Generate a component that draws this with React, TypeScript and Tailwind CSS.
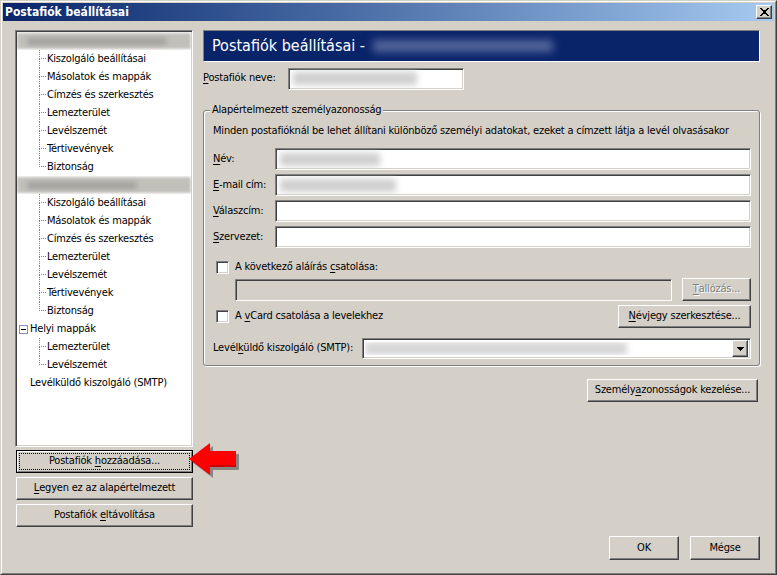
const raised =
  "border border-t-white border-l-white border-r-[#404040] border-b-[#404040] shadow-[inset_-1px_-1px_#808080,inset_1px_1px_#d4d0c8] bg-[#d4d0c8]";
const sunken =
  "border border-t-[#808080] border-l-[#808080] border-r-white border-b-white shadow-[inset_1px_1px_#404040,inset_-1px_-1px_#d4d0c8]";

const accountItems = [
  "Kiszolgáló beállításai",
  "Másolatok és mappák",
  "Címzés és szerkesztés",
  "Lemezterület",
  "Levélszemét",
  "Tértivevények",
  "Biztonság",
];

const U = ({ children }: { children: React.ReactNode }) => (
  <span className="underline underline-offset-[2px] decoration-1">{children}</span>
);

function TreeChild({ label, last }: { label: string; last?: boolean }) {
  return (
    <div className="flex h-[18px]">
      <div className="w-[22px] shrink-0" />
      <div className="flex w-[7px] shrink-0 flex-col">
        <div className="h-[9px] border-b border-l border-dotted border-[#808080]" />
        <div className={last ? "flex-1" : "flex-1 border-l border-dotted border-[#808080]"} />
      </div>
      <span className="self-center pl-px leading-[14px]">{label}</span>
    </div>
  );
}

// account name rows are blurred in the original
function BlurRow({ w }: { w: number }) {
  return (
    <div className="flex h-[18px] items-center overflow-hidden">
      <div className="flex h-[16px] w-full items-center bg-[#c2c0bb] pl-[10px] blur-[1.5px]">
        <div className={`h-[7px] rounded-full bg-[#a3a19d] blur-[2px] ${w === 1 ? "w-[140px]" : "w-[110px]"}`} />
      </div>
    </div>
  );
}

function Btn({ children, className = "", disabled }: { children: React.ReactNode; className?: string; disabled?: boolean }) {
  return (
    <div
      className={`${raised} flex h-[23px] items-center justify-center ${
        disabled ? "text-[#808080] [text-shadow:1px_1px_0_#ffffff]" : ""
      } ${className}`}
    >
      {children}
    </div>
  );
}

function Check() {
  return <div className={`${sunken} h-[13px] w-[13px] shrink-0 bg-white`} />;
}

function Field({ blur, className = "" }: { blur?: string; className?: string }) {
  return (
    <div className={`${sunken} flex h-[22px] items-center overflow-hidden bg-white pl-[4px] ${className}`}>
      {blur && <div className={`h-[13px] bg-[#cfcfcf] blur-[3px] ${blur}`} />}
    </div>
  );
}

export default function App() {
  return (
    <div className="h-[575px] w-[777px] border border-t-[#d4d0c8] border-l-[#d4d0c8] border-r-[#404040] border-b-[#404040] bg-[#d4d0c8] text-[11px] tracking-[-0.2px] text-black [font-family:'DejaVu_Sans_Condensed','DejaVu_Sans',sans-serif] [font-stretch:condensed]">
      <div className="flex h-full flex-col border border-t-white border-l-white border-r-[#808080] border-b-[#808080] p-px">
        {/* title bar */}
        <div className="flex h-[18px] shrink-0 items-center justify-between bg-linear-to-r from-[#0a246a] to-[#a6caf0] pl-[2px] pr-[2px]">
          <span className="text-[12px] font-bold tracking-normal text-white">Postafiók beállításai</span>
          <div className={`${raised} flex h-[14px] w-[16px] items-center justify-center`}>
            <svg width="9" height="8" viewBox="0 0 9 8" shapeRendering="crispEdges">
              <path d="M0 0h2v1h1v1h3v-1h1v-1h2v1h-1v1h-1v1h-1v2h1v1h1v1h1v1h-2v-1h-1v-1h-3v1h-1v1h-2v-1h1v-1h1v-1h1v-2h-1v-1h-1z" fill="#000" />
              <rect x="3" y="3" width="3" height="2" fill="#000" />
            </svg>
          </div>
        </div>

        {/* body */}
        <div className="flex flex-1 pb-[12px] pl-[12px] pt-[9px]">
          {/* left column */}
          <div className="relative flex w-[178px] shrink-0 flex-col">
            <div className={`${sunken} h-[417px] bg-white p-px`}>
              <BlurRow w={1} />
              {accountItems.map((t, i) => (
                <TreeChild key={"a" + i} label={t} last={i === accountItems.length - 1} />
              ))}
              <BlurRow w={2} />
              {accountItems.map((t, i) => (
                <TreeChild key={"b" + i} label={t} last={i === accountItems.length - 1} />
              ))}
              <div className="flex h-[18px] items-center">
                <div className="ml-[2px] flex h-[9px] w-[9px] items-center justify-center border border-[#8b8bc4] bg-white">
                  <div className="h-px w-[5px] bg-black" />
                </div>
                <span className="ml-[2px] leading-[14px]">Helyi mappák</span>
              </div>
              <TreeChild label="Lemezterület" />
              <TreeChild label="Levélszemét" last />
              <div className="flex h-[18px] items-center pl-[13px]">
                <span className="leading-[14px]">Levélküldő kiszolgáló (SMTP)</span>
              </div>
            </div>

            <div className="ml-px mt-[3px] flex w-[177px] flex-col gap-[4px]">
              <div className="h-[23px] border border-black">
                <div className="h-full border border-t-white border-l-white border-r-[#808080] border-b-[#808080] bg-[#d4d0c8] p-px">
                  <div className="flex h-full items-center justify-center border border-dotted border-black">
                    Postafiók&nbsp;<U>h</U>ozzáadása...
                  </div>
                </div>
              </div>
              <Btn>
                <U>L</U>egyen ez az alapértelmezett
              </Btn>
              <Btn>
                Postafiók&nbsp;<U>e</U>ltávolítása
              </Btn>
            </div>

            {/* red annotation arrow */}
            <svg className="absolute left-[172px] top-[412px]" width="54" height="38" viewBox="0 0 54 38">
              <polygon points="5,20 26,4 26,12 52,12 52,28 26,28 26,36" fill="rgba(0,0,0,0.35)" />
              <polygon points="2,17 23,1 23,9 49,9 49,25 23,25 23,33" fill="#ff0000" />
              <polygon points="23,25 49,25 49,23 23,23" fill="#d10000" />
            </svg>
          </div>

          {/* right column */}
          <div className="ml-[10px] flex w-[557px] shrink-0 flex-col">
            <div className="flex h-[32px] items-center overflow-hidden border border-t-[#808080] border-l-[#808080] border-r-white border-b-white bg-[#0a246a] pl-[8px]">
              <span className="text-[16px] tracking-normal text-white">Postafiók beállításai -</span>
              <div className="ml-[8px] h-[12px] w-[180px] bg-[#56689c] blur-[4px]" />
            </div>

            <div className="mt-[6px] flex h-[21px] items-center">
              <span className="w-[85px]">
                <U>P</U>ostafiók neve:
              </span>
              <Field className="h-[21px] w-[176px]" blur="w-[124px]" />
            </div>

            <div className="mt-[21px] flex flex-col rounded-[3px] border border-[#808080] pb-[6px] pl-[9px] pr-[8px] shadow-[1px_1px_0_#ffffff,inset_1px_1px_0_#ffffff]">
              <span className="-ml-[3px] -mt-[8px] self-start bg-[#d4d0c8] px-[2px] leading-[14px]">
                Alapértelmezett személyazonosság
              </span>
              <span className="mt-[7px] leading-[14px]">
                Minden postafióknál be lehet állítani különböző személyi adatokat, ezeket a címzett látja a levél olvasásakor
              </span>

              <div className="mt-[10px] flex flex-col gap-[4px]">
                <div className="flex items-center">
                  <span className="w-[62px]">
                    <U>N</U>év:
                  </span>
                  <Field className="flex-1" blur="w-[100px]" />
                </div>
                <div className="flex items-center">
                  <span className="w-[62px]">
                    <U>E</U>-mail cím:
                  </span>
                  <Field className="flex-1" blur="w-[116px]" />
                </div>
                <div className="flex items-center">
                  <span className="w-[62px]">
                    <U>V</U>álaszcím:
                  </span>
                  <Field className="flex-1" />
                </div>
                <div className="flex items-center">
                  <span className="w-[62px]">
                    <U>S</U>zervezet:
                  </span>
                  <Field className="flex-1" />
                </div>
              </div>

              <div className="mt-[10px] flex h-[18px] items-center">
                <div className="ml-[3px]">
                  <Check />
                </div>
                <span className="ml-[6px]">
                  A következő aláírás <U>c</U>satolása:
                </span>
              </div>

              <div className="mt-[2px] flex h-[23px] items-center">
                <div className={`${sunken} ml-[22px] h-[22px] flex-1 bg-[#d4d0c8]`} />
                <Btn disabled className="ml-[10px] w-[69px]">
                  <U>T</U>allózás...
                </Btn>
              </div>

              <div className="mt-[4px] flex h-[23px] items-center">
                <div className="ml-[3px]">
                  <Check />
                </div>
                <span className="ml-[6px]">
                  A <U>v</U>Card csatolása a levelekhez
                </span>
                <Btn className="ml-auto w-[133px]">
                  <U>N</U>évjegy szerkesztése...
                </Btn>
              </div>

              <div className="mt-[10px] flex h-[21px] items-center">
                <span className="w-[149px]">
                  Levél<U>k</U>üldő kiszolgáló (SMTP):
                </span>
                <div className={`${sunken} flex h-[21px] flex-1 items-center bg-white p-[2px]`}>
                  <div className="flex-1 overflow-hidden">
                    <div className="h-[13px] w-[262px] bg-[#d6d6d6] blur-[3px]" />
                  </div>
                  <div className={`${raised} flex h-[17px] w-[16px] items-center justify-center`}>
                    <svg width="7" height="4" viewBox="0 0 7 4" shapeRendering="crispEdges">
                      <path d="M0 0h7v1h-1v1h-1v1h-1v1h-1v-1h-1v-1h-1v-1h-1z" fill="#000" />
                    </svg>
                  </div>
                </div>
              </div>
            </div>

            <Btn className="mr-[2px] mt-[13px] w-[171px] self-end">
              Személy<U>a</U>zonosságok kezelése...
            </Btn>

            <div className="mt-auto flex gap-[11px] self-end">
              <Btn className="h-[24px] w-[70px]">OK</Btn>
              <Btn className="h-[24px] w-[70px]">Mégse</Btn>
            </div>
          </div>
        </div>
      </div>
    </div>
  );
}
